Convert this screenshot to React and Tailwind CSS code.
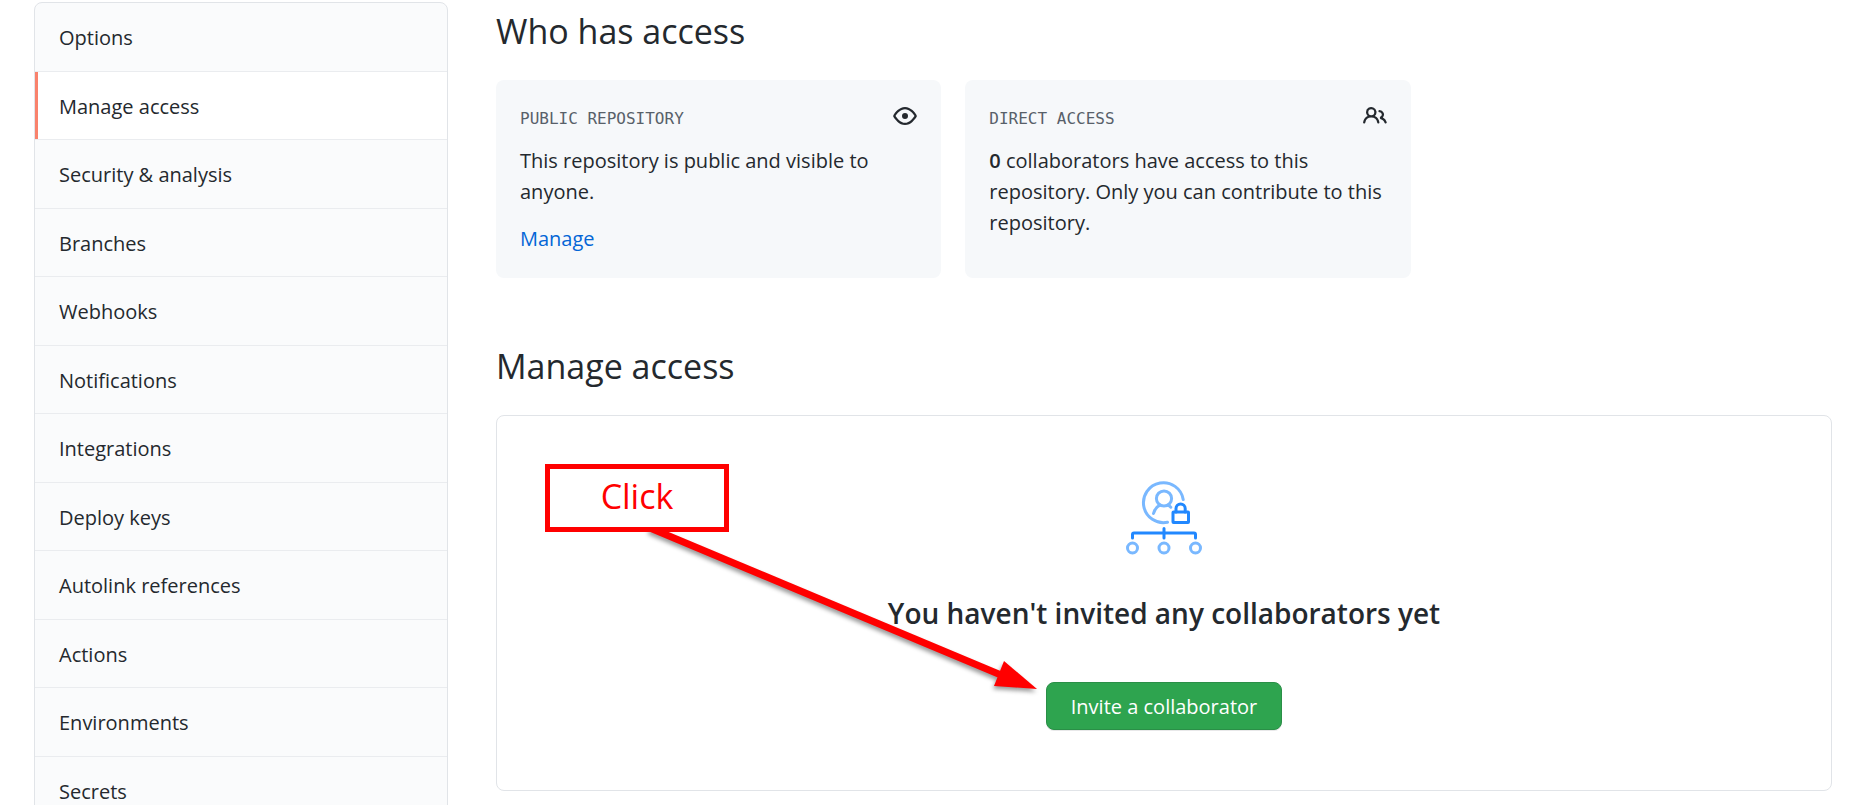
const NAV_ITEMS = [
  'Options',
  'Manage access',
  'Security & analysis',
  'Branches',
  'Webhooks',
  'Notifications',
  'Integrations',
  'Deploy keys',
  'Autolink references',
  'Actions',
  'Environments',
  'Secrets',
];

function EyeIcon() {
  return (
    <svg viewBox="0 0 16 16" className="size-6 shrink-0" fill="currentColor" aria-hidden="true">
      <path
        fillRule="evenodd"
        d="M1.679 7.932c.412-.621 1.242-1.75 2.366-2.717C5.175 4.242 6.527 3.5 8 3.5c1.473 0 2.824.742 3.955 1.715 1.124.967 1.954 2.096 2.366 2.717a.119.119 0 010 .136c-.412.621-1.242 1.75-2.366 2.717C10.825 11.758 9.473 12.5 8 12.5c-1.473 0-2.824-.742-3.955-1.715C2.92 9.818 2.09 8.69 1.679 8.068a.119.119 0 010-.136zM8 2c-1.981 0-3.67.992-4.933 2.078C1.797 5.169.88 6.423.43 7.1a1.619 1.619 0 000 1.798c.45.678 1.367 1.932 2.637 3.024C4.329 13.008 6.019 14 8 14c1.981 0 3.67-.992 4.933-2.078 1.27-1.091 2.187-2.345 2.637-3.023a1.619 1.619 0 000-1.798c-.45-.678-1.367-1.932-2.637-3.023C11.671 2.992 9.981 2 8 2zm0 8a2 2 0 100-4 2 2 0 000 4z"
      />
    </svg>
  );
}

function PeopleIcon() {
  return (
    <svg viewBox="0 0 16 16" className="size-6 shrink-0" fill="currentColor" aria-hidden="true">
      <path
        fillRule="evenodd"
        d="M5.5 3.5a2 2 0 100 4 2 2 0 000-4zM2 5.5a3.5 3.5 0 115.898 2.549 5.507 5.507 0 013.034 4.084.75.75 0 11-1.482.235 4.001 4.001 0 00-7.9 0 .75.75 0 01-1.482-.236A5.507 5.507 0 013.102 8.05 3.49 3.49 0 012 5.5zM11 4a.75.75 0 100 1.5 1.5 1.5 0 01.666 2.844.75.75 0 00-.416.672v.352a.75.75 0 00.574.73c1.2.289 2.162 1.2 2.522 2.372a.75.75 0 101.434-.44 5.01 5.01 0 00-2.56-3.012A3 3 0 0011 4z"
      />
    </svg>
  );
}

function TeamAccessArt() {
  return (
    <svg
      width="84"
      height="84"
      viewBox="0 0 84 84"
      fill="none"
      strokeLinecap="round"
      strokeLinejoin="round"
      strokeWidth="3"
      aria-hidden="true"
    >
      <g stroke="#79b8ff">
        <path d="M45.5 46.3A20 20 0 1 1 61.2 23.5" />
        <circle cx="42" cy="22.5" r="7.6" />
        <path d="M31.5 37.5C32.5 33.5 35 30.5 38 29.2M46 29.2C47 29.7 48 30.4 48.8 31.2" />
        <circle cx="10.5" cy="72" r="5" />
        <circle cx="42" cy="72" r="5" />
        <circle cx="73.5" cy="72" r="5" />
      </g>
      <g stroke="#2188ff">
        <rect x="51" y="36" width="15.5" height="10.5" rx="0.5" />
        <path d="M54 36V32.5A4.6 4.6 0 0 1 63.2 32.5V36" />
        <path d="M42 52.5V62M10.5 62V58.5Q10.5 57 12 57H72Q73.5 57 73.5 58.5V62" />
      </g>
    </svg>
  );
}

function SectionHeading({ children }) {
  return <h2 className="pt-[2px] pb-[22px] text-[34px] leading-[54px]">{children}</h2>;
}

function AccessCard({ label, icon, children }) {
  return (
    <section className="w-1/3 rounded-lg bg-[#f6f8fa] p-6">
      <div className="flex h-6 items-center justify-between">
        <h3 className="pt-1.5 font-['DejaVu_Sans_Mono',monospace] text-base text-[#586069] uppercase">{label}</h3>
        {icon}
      </div>
      <div className="pt-[17px] leading-[31px]">{children}</div>
    </section>
  );
}

function ClickCallout() {
  return (
    <div className="pointer-events-none absolute top-12 left-12">
      <svg
        className="absolute top-0 left-0 overflow-visible drop-shadow-[-1px_3px_2px_rgba(0,0,0,0.4)]"
        width="500"
        height="232"
        viewBox="0 0 500 232"
        aria-hidden="true"
      >
        <path d="M105 64L456 211" stroke="#f00" strokeWidth="7" />
        <path d="M459 197L492 225L449 222Z" fill="#f00" />
      </svg>
      <div className="relative flex h-[68px] w-[184px] items-center justify-center border-5 border-[#f00] bg-white pb-1 text-[34px] leading-none text-[#f00]">
        Click
      </div>
    </div>
  );
}

export default function App() {
  return (
    <div className="flex h-screen items-start gap-12 overflow-hidden bg-white pt-[2px] pr-[26px] pl-[34px] font-['Open_Sans','Noto_Sans',sans-serif] text-[20px] leading-8 text-[#24292e]">
      <nav className="w-[414px] shrink-0 overflow-hidden rounded-lg border border-[#e1e4e8] bg-[#fafbfc]" aria-label="Settings">
        <ul>
          {NAV_ITEMS.map((item) => (
            <li key={item} className="flex border-b border-[#eaecef] last:border-b-0 odd:h-[69px] even:h-[68px]">
              <a
                href="#"
                aria-current={item === 'Manage access' ? 'page' : undefined}
                className="flex flex-1 items-center border-l-3 border-transparent pt-[2px] pl-[21px] aria-[current=page]:border-[#f9826c] aria-[current=page]:bg-white"
              >
                {item}
              </a>
            </li>
          ))}
        </ul>
      </nav>

      <main className="min-w-0 flex-1">
        <SectionHeading>Who has access</SectionHeading>
        <div className="mb-[59px] flex gap-6">
          <AccessCard label="Public repository" icon={<EyeIcon />}>
            <p>This repository is public and visible to anyone.</p>
            <a href="#" className="mt-4 inline-block text-[#0366d6]">Manage</a>
          </AccessCard>
          <AccessCard label="Direct access" icon={<PeopleIcon />}>
            <p>
              <strong className="font-semibold">0</strong> collaborators have access to this repository. Only you can
              contribute to this repository.
            </p>
          </AccessCard>
        </div>

        <SectionHeading>Manage access</SectionHeading>
        <section className="relative flex flex-col items-center rounded-lg border border-[#e1e4e8] pt-15 pb-15">
          <TeamAccessArt />
          <h3 className="mt-8 text-[28px] leading-[42px] font-semibold">You haven't invited any collaborators yet</h3>
          <button
            type="button"
            className="mt-12 h-12 rounded-lg border border-[#2a8f47] bg-[#2ea44f] px-6 pt-[2px] text-white shadow-[0_1px_0_rgba(27,31,35,0.1)]"
          >
            Invite a collaborator
          </button>
          <ClickCallout />
        </section>
      </main>
    </div>
  );
}
